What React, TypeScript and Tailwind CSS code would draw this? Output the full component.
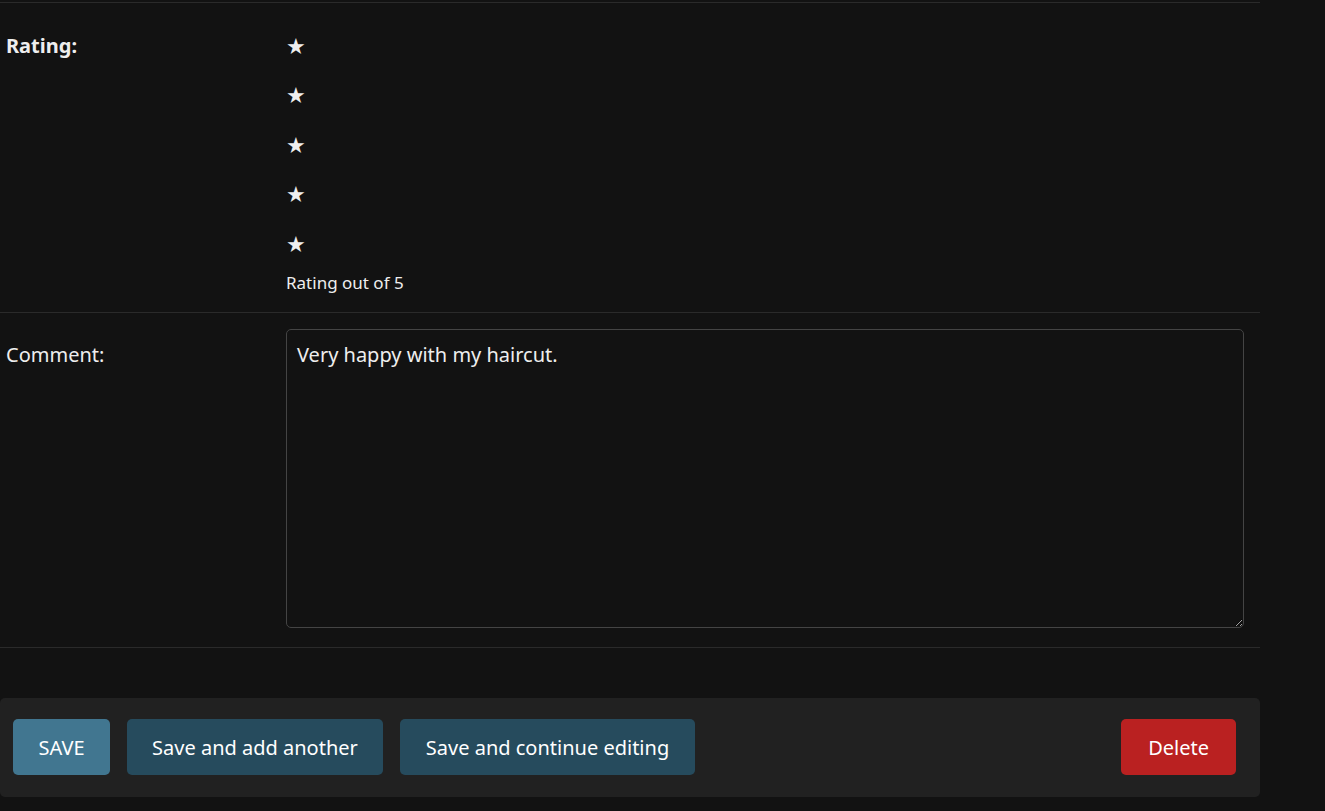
import { useState } from "react";

const font = { fontFamily: '"Noto Sans", "Open Sans", sans-serif' };

const Stars = () => (
  <div className="flex flex-col">
    {[1, 2, 3, 4, 5].map((n) => (
      <div key={n} className="h-[49.5px] flex items-center text-[22px] text-[#eeeeee] leading-none">
        ★
      </div>
    ))}
  </div>
);

export default function App() {
  const [comment, setComment] = useState("Very happy with my haircut.");

  return (
    <div className="min-h-[811px] bg-[#121212] text-[#eeeeee]" style={font}>
      <div className="w-[1260px] pt-[2px]">
        <div className="flex border-t border-[#2a2a2a] pt-[17px] pb-[18px]">
          <div className="w-[286px] shrink-0 pl-[6px] h-[49.5px] flex items-center pt-[2px] text-[20px] font-bold">Rating:</div>
          <div className="flex flex-col">
            <Stars />
            <p className="mt-[4px] text-[17px] leading-[22px] text-[#eeeeee]">Rating out of 5</p>
          </div>
        </div>

        <div className="flex border-t border-[#2a2a2a] pt-[16px] pb-[19px] pr-[16px]">
          <label className="w-[286px] pl-[6px] mt-[12px] text-[20px] leading-[27px] shrink-0">Comment:</label>
          <textarea
            value={comment}
            onChange={(e) => setComment(e.target.value)}
            className="flex-1 h-[299px] rounded-[5px] border border-[#444] bg-[#121212] px-[10px] py-[11px] text-[20px] leading-[27px] text-[#eeeeee] outline-none"
          />
        </div>

        <div className="border-t border-[#2a2a2a] pt-[50px]">
          <div className="flex items-center gap-[17px] bg-[#212121] rounded-[5px] pl-[13px] pr-[24px] pt-[21px] pb-[22px]">
            <button className="h-[56px] px-[25.5px] pt-[3px] rounded-[5px] bg-[#417690] text-[20px] text-white">SAVE</button>
            <button className="h-[56px] px-[25px] pt-[3px] rounded-[5px] bg-[#264b5d] text-[20px] text-white">Save and add another</button>
            <button className="h-[56px] px-[26px] pt-[3px] rounded-[5px] bg-[#264b5d] text-[20px] text-white">Save and continue editing</button>
            <button className="ml-auto h-[56px] px-[27px] pt-[3px] rounded-[5px] bg-[#ba2121] text-[20px] text-white">Delete</button>
          </div>
        </div>
      </div>
    </div>
  );
}
